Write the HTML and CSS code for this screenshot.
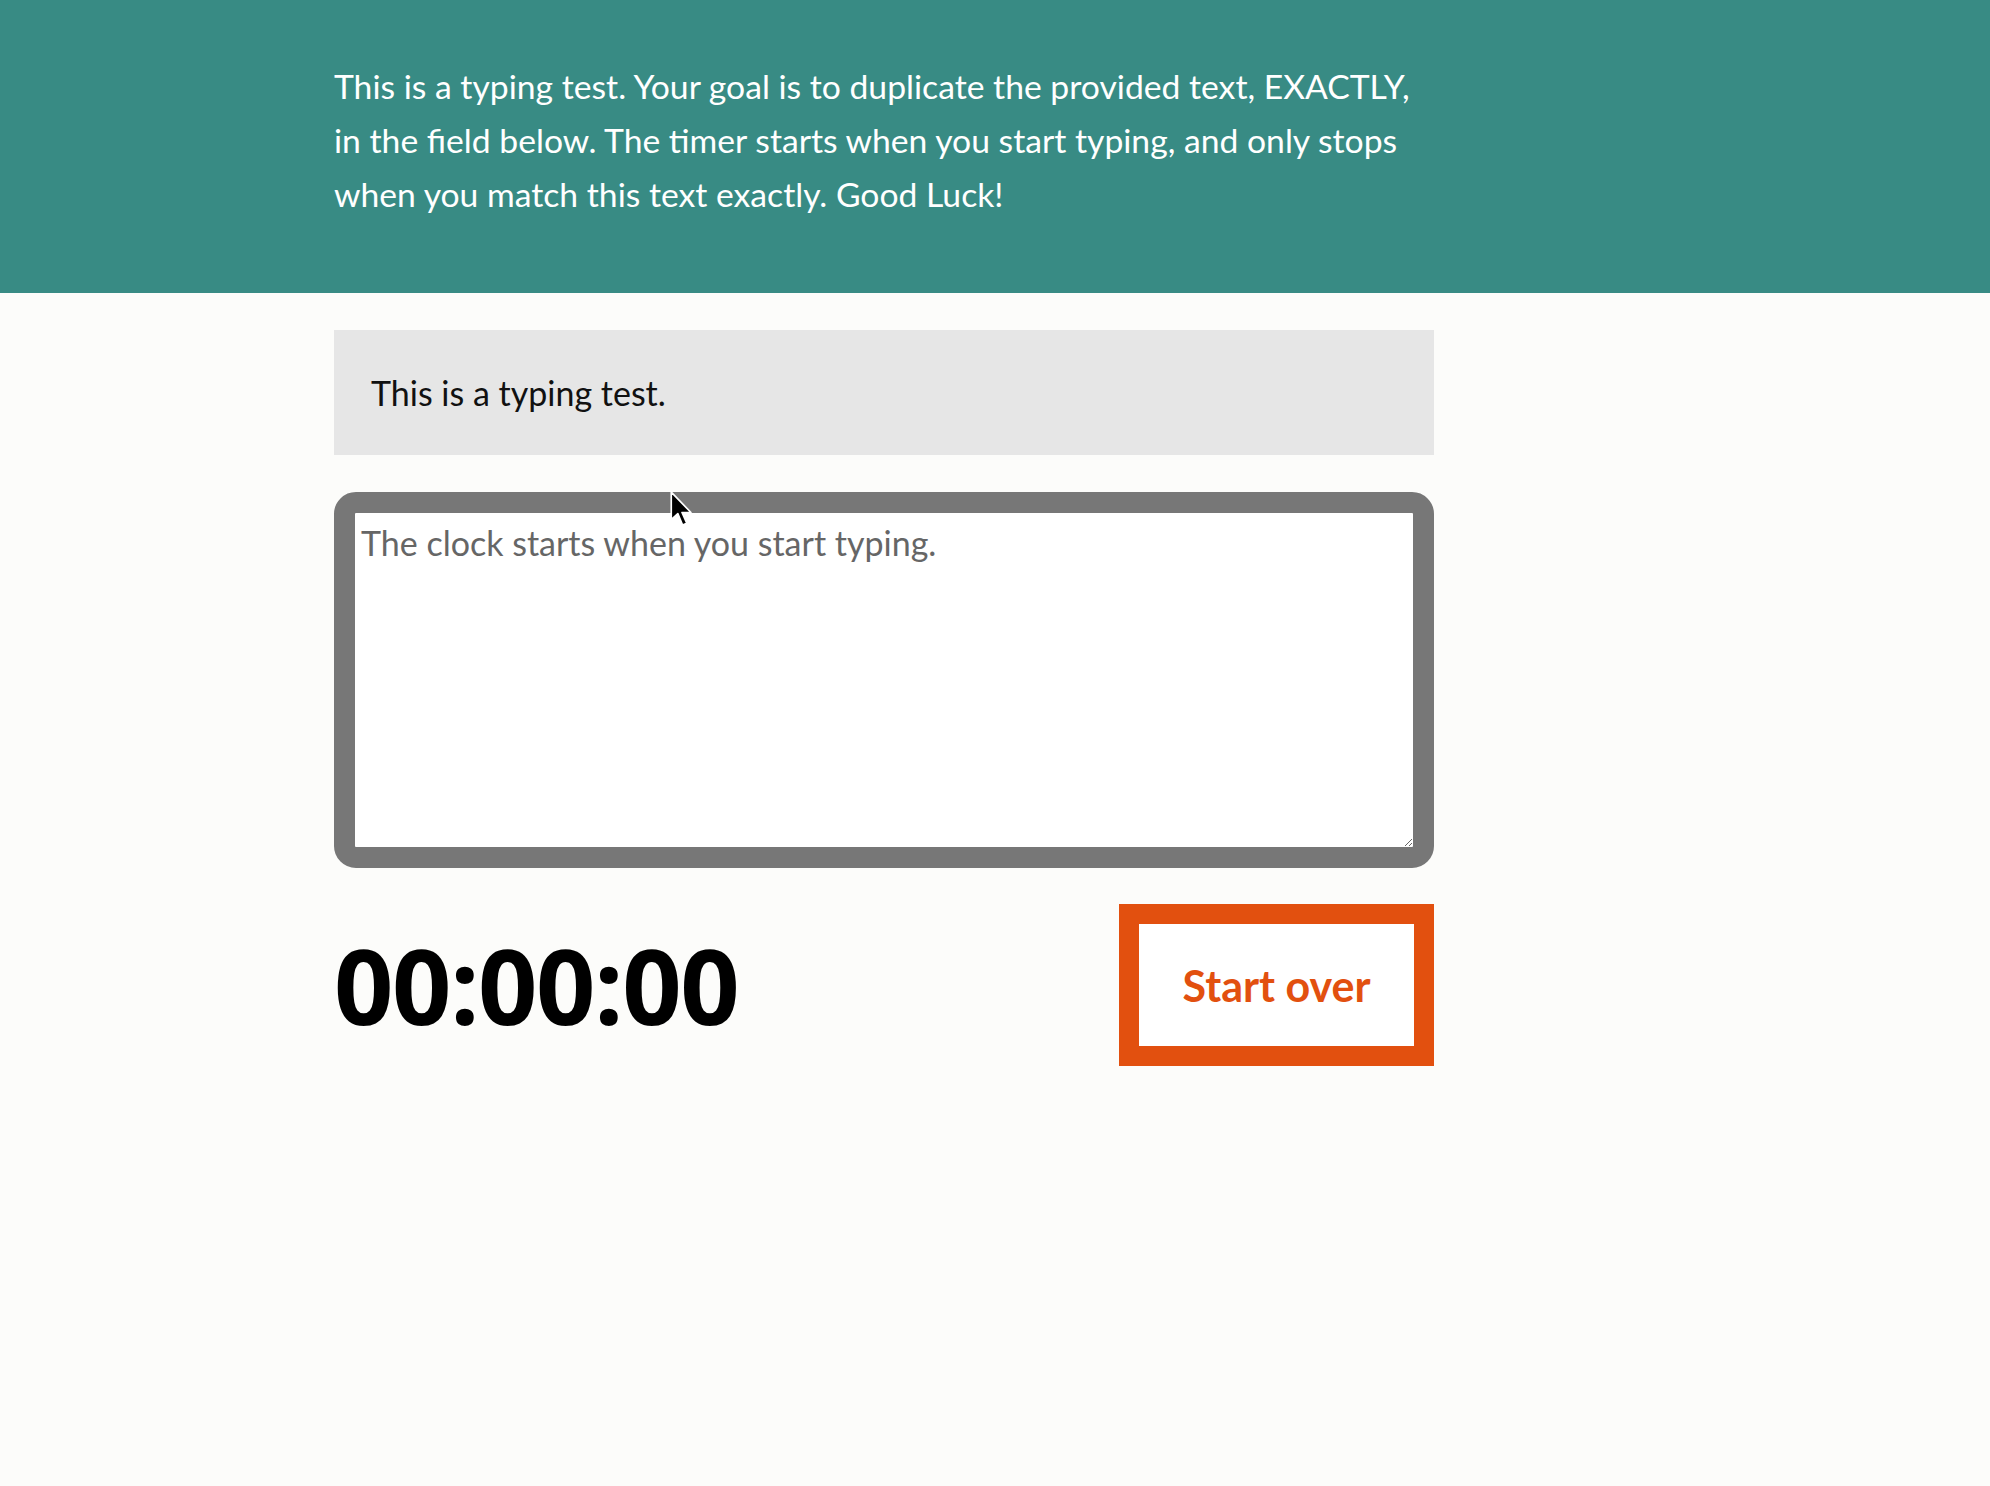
FILE: index.html
```html
<!DOCTYPE html>
<html lang="en">
<head>
<meta charset="utf-8">
<title>Typing Test</title>
<link rel="stylesheet" href="styles.css">
</head>
<body>
<header class="intro">
  <p class="intro-text">This is a typing test. Your goal is to duplicate the provided text, EXACTLY, in the field below. The timer starts when you start typing, and only stops when you match this text exactly. Good Luck!</p>
</header>
<main class="main">
  <div class="origin">
    <p class="origin-text">This is a typing test.</p>
  </div>
  <div class="test-area">
    <textarea class="test-input" placeholder="The clock starts when you start typing."></textarea>
  </div>
  <div class="meta">
    <div class="timer">00:00:00</div>
    <button class="reset" type="button">Start over</button>
  </div>
</main>
<svg class="cursor" width="24" height="37" viewBox="0 0 20 31"><path d="M1 1 L1 24 L6.5 19 L10.5 28.5 L14 27 L10 18 L17.5 18 Z" fill="#000" stroke="#fff" stroke-width="1.4" stroke-linejoin="round"/></svg>
</body>
</html>
```

FILE: styles.css
```css
html, body {
  margin: 0;
  padding: 0;
}
body {
  background: #fcfcfa;
  font-family: "Lato", "Open Sans", sans-serif;
  color: #111;
  min-height: 1486px;
  position: relative;
}
.intro {
  background: #388b84;
  height: 293px;
  box-sizing: border-box;
  padding: 59px 0 0 334px;
}
.intro-text {
  margin: 0;
  width: 1100px;
  color: #fff;
  font-size: 33.7px;
  line-height: 54px;
}
.main {
  width: 1100px;
  margin-left: 334px;
  padding-top: 37px;
}
.origin {
  background: #e6e6e6;
  padding: 36px 37px;
}
.origin-text {
  margin: 0;
  font-size: 34px;
  line-height: 53px;
  color: #111;
}
.test-area {
  margin-top: 37px;
}
.test-input {
  display: block;
  box-sizing: border-box;
  width: 1100px;
  height: 376px;
  border: 21px solid #777;
  border-radius: 22px;
  background: #fff;
  padding: 9px 6px;
  font-family: "Lato", "Open Sans", sans-serif;
  font-size: 34px;
  color: #111;
  outline: none;
}
.test-input::placeholder {
  color: #666;
}
.meta {
  margin-top: 36px;
  display: flex;
  justify-content: space-between;
  align-items: center;
}
.timer {
  font-family: "Open Sans", sans-serif;
  font-weight: 700;
  font-size: 104px;
  line-height: 1;
  color: #000;
  letter-spacing: -1.5px;
}
.reset {
  box-sizing: border-box;
  width: 315px;
  height: 162px;
  border: 20px solid #e2500f;
  background: #fff;
  color: #e2500f;
  font-family: "Lato", "Open Sans", sans-serif;
  font-weight: 700;
  font-size: 43px;
  padding: 0;
  cursor: pointer;
}
.cursor {
  position: absolute;
  left: 670px;
  top: 491px;
}
```
